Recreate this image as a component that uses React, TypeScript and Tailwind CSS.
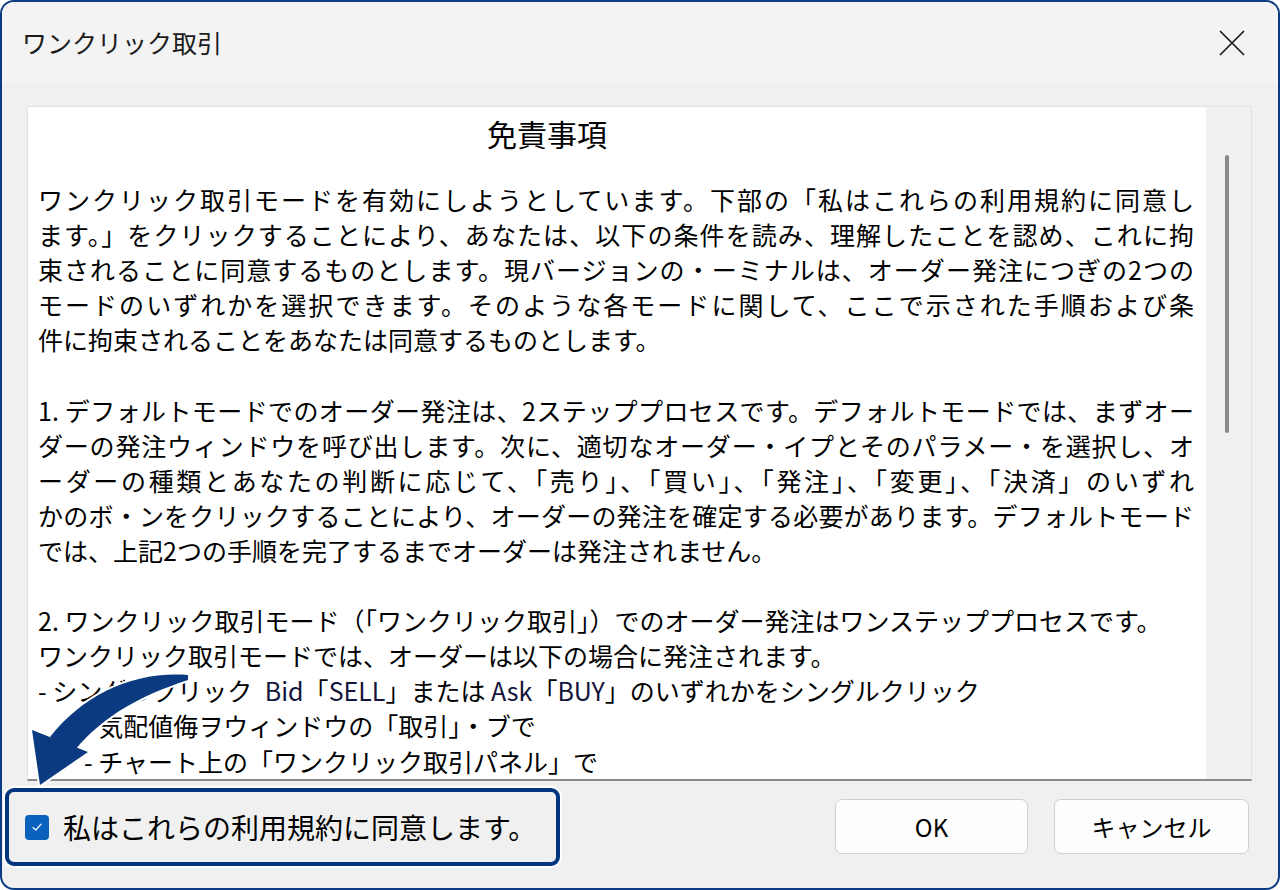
import React from "react";

const FULL = "w-[1156px] text-justify [text-align-last:justify]";

function Line({ children, full, indent }: { children?: React.ReactNode; full?: boolean; indent?: boolean }) {
  return (
    <div className={`${full ? FULL : "whitespace-nowrap"} ${indent ? "pl-[46px]" : ""} h-[35.1px]`}>
      {children}
    </div>
  );
}

function Blank() {
  return <div className="h-[35.1px]" />;
}

export default function App() {
  return (
    <div className="relative w-[1280px] h-[890px] bg-white font-['Noto_Sans_CJK_JP','Noto_Sans',sans-serif]">
      <div className="w-full h-full border-2 border-[#0b3b82] rounded-[14px] overflow-hidden flex flex-col bg-[#f0f0f0]">
        {/* Title bar */}
        <div className="h-[81px] shrink-0 bg-[#f3f3f3] flex items-center justify-between pl-[20px] pr-[32px]">
          <span className="text-[25px] leading-none text-[#1b1b1b]">ワンクリック取引</span>
          <svg width="28" height="28" viewBox="0 0 28 28">
            <path d="M2 2 L26 26 M26 2 L2 26" stroke="#1b1b1b" strokeWidth="1.7" fill="none" />
          </svg>
        </div>

        {/* Body */}
        <div className="flex-1 flex flex-col">
          <div className="mt-[23px] ml-[25px] mr-[26px] h-[675px] flex bg-white border border-[#e2e2e2] border-b-2 border-b-[#8a8a8a] overflow-hidden">
            <div className="flex-1 pl-[10px] pt-[9px] text-black text-[25px] leading-[35.1px]">
              <div className="w-[1018px] text-center text-[30px] leading-[35px]">免責事項</div>
              <div className="mt-[31px]">
                <Line full>ワンクリック取引モードを有効にしようとしています。下部の「私はこれらの利用規約に同意し</Line>
                <Line full>ます。」をクリックすることにより、あなたは、以下の条件を読み、理解したことを認め、これに拘</Line>
                <Line full>束されることに同意するものとします。現バージョンの・ーミナルは、オーダー発注につぎの2つの</Line>
                <Line full>モードのいずれかを選択できます。そのような各モードに関して、ここで示された手順および条</Line>
                <Line>件に拘束されることをあなたは同意するものとします。</Line>
                <Blank />
                <Line full>1. デフォルトモードでのオーダー発注は、2ステッププロセスです。デフォルトモードでは、まずオー</Line>
                <Line full>ダーの発注ウィンドウを呼び出します。次に、適切なオーダー・イプとそのパラメー・を選択し、オ</Line>
                <Line full>ーダーの種類とあなたの判断に応じて、「売り」、「買い」、「発注」、「変更」、「決済」のいずれ</Line>
                <Line full>かのボ・ンをクリックすることにより、オーダーの発注を確定する必要があります。デフォルトモード</Line>
                <Line>では、上記2つの手順を完了するまでオーダーは発注されません。</Line>
                <Blank />
                <Line>2. ワンクリック取引モード（「ワンクリック取引」）でのオーダー発注はワンステッププロセスです。</Line>
                <Line>ワンクリック取引モードでは、オーダーは以下の場合に発注されます。</Line>
                <Line>
                  - シングルクリック{"\u2002"}<span className="text-[#14143c]">Bid</span>「<span className="text-[#14143c]">SELL</span>」または <span className="text-[#14143c]">Ask</span>「<span className="text-[#14143c]">BUY</span>」のいずれかをシングルクリック
                </Line>
                <Line indent>- 気配値侮ヲウィンドウの「取引」・ブで</Line>
                <Line indent>- チャート上の「ワンクリック取引パネル」で</Line>
              </div>
            </div>
            <div className="w-[45px] shrink-0 bg-[#f1f1f1] pt-[48px] pl-[19px]">
              <div className="w-[4px] h-[278px] rounded-full bg-[#8a8a8a]" />
            </div>
          </div>

          {/* Bottom row */}
          <div className="flex items-start">
            <div className="mt-[7px] ml-[3px] w-[555px] h-[78px] border-4 border-[#003580] rounded-[9px] ring-2 ring-white bg-[#f0f0f0] flex items-center pl-[16px] gap-[14px]">
              <div className="w-[24px] h-[25px] rounded-[4px] bg-[#0a62bd] flex items-center justify-center">
                <svg width="14" height="14" viewBox="0 0 14 14">
                  <path d="M3 7.4 L5.8 10 L11 4.2" stroke="#e8f0ff" strokeWidth="1.3" fill="none" strokeLinecap="round" strokeLinejoin="round" />
                </svg>
              </div>
              <span className="text-[28px] leading-none text-black">私はこれらの利用規約に同意します。</span>
            </div>
            <button className="mt-[18px] ml-[275px] w-[193px] h-[55px] rounded-[7px] border border-[#cfcfcf] bg-[#fdfdfd] text-[24px] text-black flex items-center justify-center">
              OK
            </button>
            <button className="mt-[18px] ml-[26px] w-[195px] h-[55px] rounded-[7px] border border-[#cfcfcf] bg-[#fdfdfd] text-[24px] text-black flex items-center justify-center">
              キャンセル
            </button>
          </div>
        </div>
      </div>

      {/* Annotation arrow */}
      <svg className="absolute left-0 top-0 pointer-events-none" width="1280" height="890" viewBox="0 0 1280 890">
        <g fill="#ffffff" stroke="#ffffff" strokeWidth="4" strokeLinejoin="round">
          <path d="M188 675 C134 671 84 694 50 737 L75 750 C104 715 142 695 188 680 Z" />
          <path d="M32 730 L88 752 L40 785 Z" />
        </g>
        <g fill="#0b3a80">
          <path d="M188 675 C134 671 84 694 50 737 L75 750 C104 715 142 695 188 680 Z" />
          <path d="M32 730 L88 752 L40 785 Z" />
        </g>
      </svg>
    </div>
  );
}
